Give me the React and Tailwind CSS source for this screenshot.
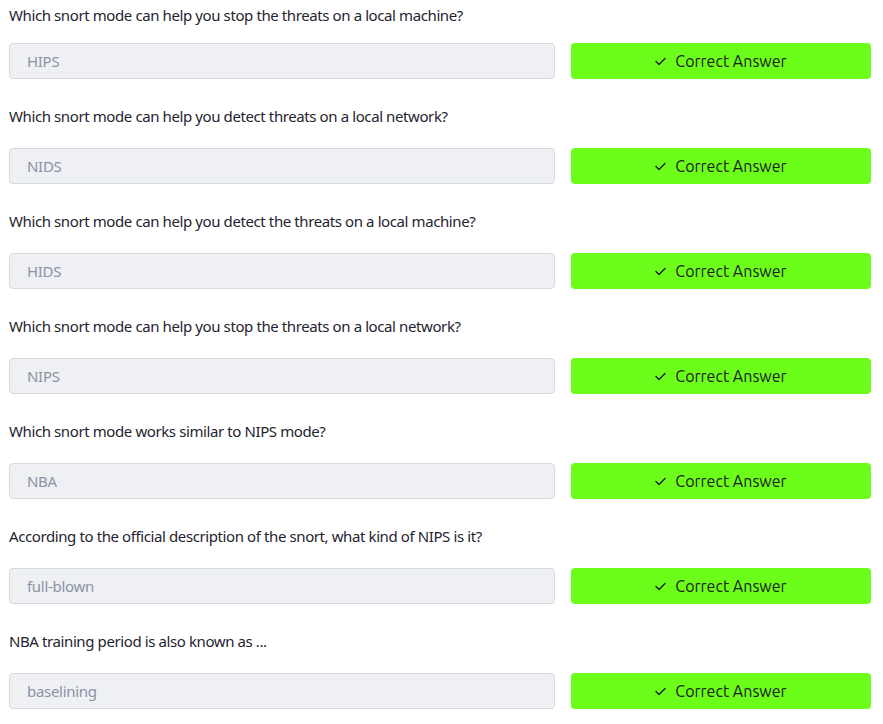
const QUESTIONS = [
  { q: 'Which snort mode can help you stop the threats on a local machine?', a: 'HIPS' },
  { q: 'Which snort mode can help you detect threats on a local network?', a: 'NIDS' },
  { q: 'Which snort mode can help you detect the threats on a local machine?', a: 'HIDS' },
  { q: 'Which snort mode can help you stop the threats on a local network?', a: 'NIPS' },
  { q: 'Which snort mode works similar to NIPS mode?', a: 'NBA' },
  { q: 'According to the official description of the snort, what kind of NIPS is it?', a: 'full-blown' },
  { q: 'NBA training period is also known as ...', a: 'baselining' },
];

function CheckIcon() {
  return (
    <svg width="11" height="9" viewBox="0 0 11 9" fill="none" className="mr-[9px]">
      <path d="M1 4.5 L4 7.5 L10 1.5" stroke="#1c1c1c" strokeWidth="1.4" strokeLinecap="round" strokeLinejoin="round" />
    </svg>
  );
}

export default function App() {
  return (
    <div className="pl-[9px] pr-3 pt-[3px] bg-white min-h-screen overflow-hidden font-['Source_Sans_Pro','Noto_Sans',sans-serif]">
      {QUESTIONS.map((item, i) => (
        <div key={i} className="mb-[25px]">
          <p className={i === 0 ? 'text-[15px] leading-6 text-[#1f2430] mb-4 tracking-[-0.4px]' : 'text-[15px] leading-6 text-[#1f2430] mb-5 tracking-[-0.4px]'}>
            {item.q}
          </p>
          <div className="flex gap-4 h-9">
            <div className="flex-1 flex items-center pl-[17px] bg-[#eef0f4] border border-[#d6d9df] rounded text-[15px] text-[#8b93a4] tracking-[-0.3px]">
              {item.a}
            </div>
            <button className="w-[300px] flex items-center justify-center bg-[#6dfd1a] rounded text-[16px] text-[#1c1c1c] font-['Ubuntu','Open_Sans',sans-serif]">
              <CheckIcon />
              Correct Answer
            </button>
          </div>
        </div>
      ))}
    </div>
  );
}
